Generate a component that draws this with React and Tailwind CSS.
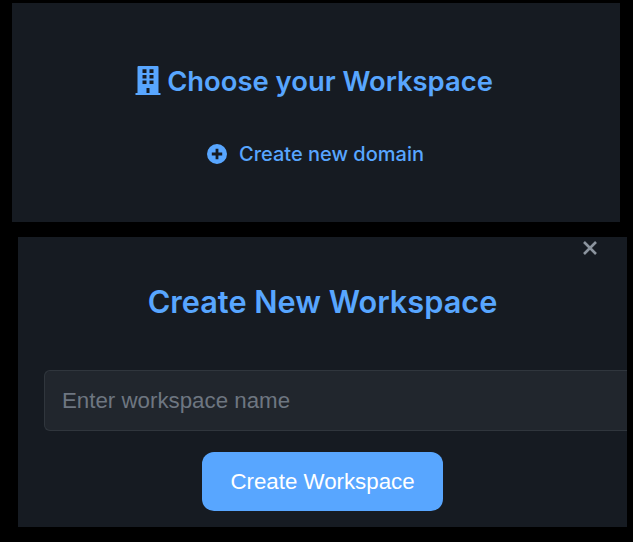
import React from 'react';

const BuildingIcon = ({ className }) => (
    <svg viewBox="0 0 26 30" className={className} fill="currentColor">
        <path
            fillRule="evenodd"
            d="M2.5 1A1 1 0 0 1 3.5 0h19a1 1 0 0 1 1 1v26h2v2H.5v-2h2V1ZM7.5 3.2v3.8h4V3.2h-4Zm7 0v3.8h4V3.2h-4Zm-7 5.8v3.6h4V9h-4Zm7 0v3.6h4V9h-4Zm-7 5.4v3.6h4v-3.6h-4Zm7 0v3.6h4v-3.6h-4ZM11.5 22v5h3v-5h-3Z"
        />
    </svg>
);

const PlusCircleIcon = ({ className }) => (
    <svg viewBox="0 0 20 20" className={className} fill="currentColor">
        <path
            fillRule="evenodd"
            d="M10 0a10 10 0 1 1 0 20 10 10 0 0 1 0-20ZM8.6 4.8v3.8H4.8v2.8h3.8v3.8h2.8v-3.8h3.8V8.6h-3.8V4.8H8.6Z"
        />
    </svg>
);

export default function App() {
    return (
        <div className="w-[633px] h-[542px] bg-black overflow-hidden font-['Inter',sans-serif]">
            {/* Workspace chooser */}
            <div className="ml-3 mt-[3px] w-[608px] h-[219px] bg-[#161b22] flex flex-col items-center">
                <h2 className="mt-[60px] flex items-center gap-1.5 pr-1 text-[27.4px] leading-[36px] font-semibold text-[#58a6ff]">
                    <BuildingIcon className="w-[26px] h-[30px]" />
                    Choose your Workspace
                </h2>
                <button className="mt-[41px] flex items-center gap-[12px] pr-px text-[20px] leading-[28px] font-medium text-[#58a6ff]">
                    <PlusCircleIcon className="w-5 h-5" />
                    Create new domain
                </button>
            </div>

            {/* Create modal */}
            <div className="relative ml-[18px] mt-[15px] w-[609px] h-[290px] bg-[#161b22] flex flex-col">
                <button className="absolute top-0 right-[29px] text-[#8b949e]">
                    <svg viewBox="0 0 16 16" className="w-4 h-4 mt-[3px]" fill="none" stroke="currentColor" strokeWidth="2.6">
                        <path d="M2 2l12 12M14 2L2 14" />
                    </svg>
                </button>
                <h2 className="mt-[46px] text-center text-[30.7px] leading-[38px] font-semibold text-[#58a6ff]">
                    Create New Workspace
                </h2>
                <input
                    placeholder="Enter workspace name"
                    className="mt-[49px] ml-[26px] w-[583px] h-[61px] px-[17px] rounded-l-md bg-[#21262d] border border-[#30363d] border-r-0 text-[22.3px] font-['Liberation_Sans',sans-serif] placeholder:text-[#6e7681] outline-none"
                />
                <button className="mt-[21px] ml-[184px] w-[241px] h-[59px] rounded-xl bg-[#58a6ff] text-white text-[22.3px] font-['Liberation_Sans',sans-serif]">
                    Create Workspace
                </button>
            </div>
        </div>
    );
}
